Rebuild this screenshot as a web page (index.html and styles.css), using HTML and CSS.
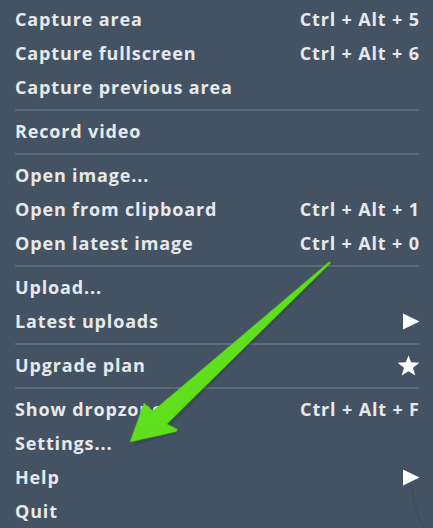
FILE: index.html
```html
<!DOCTYPE html>
<html>
<head>
<meta charset="utf-8">
<link rel="stylesheet" href="styles.css">
</head>
<body>
<div class="menu">
  <div class="item"><span>Capture area</span><span class="key">Ctrl + Alt + 5</span></div>
  <div class="item"><span>Capture fullscreen</span><span class="key">Ctrl + Alt + 6</span></div>
  <div class="item"><span>Capture previous area</span></div>
  <div class="sep"></div>
  <div class="item"><span>Record video</span></div>
  <div class="sep"></div>
  <div class="item"><span>Open image...</span></div>
  <div class="item"><span>Open from clipboard</span><span class="key">Ctrl + Alt + 1</span></div>
  <div class="item"><span>Open latest image</span><span class="key">Ctrl + Alt + 0</span></div>
  <div class="sep"></div>
  <div class="item"><span>Upload...</span></div>
  <div class="item"><span>Latest uploads</span>
    <svg class="tri" width="18" height="17" viewBox="0 0 18 17"><path d="M1 0.5 L17.5 8.5 L1 16.5 Z" fill="#fff"/></svg>
  </div>
  <div class="sep"></div>
  <div class="item"><span>Upgrade plan</span>
    <svg class="star" width="23" height="21" viewBox="0 0 24 22"><path d="M12 0.5 L14.8 7.6 L23.5 8 L16.7 13.3 L19.1 21.5 L12 16.9 L4.9 21.5 L7.3 13.3 L0.5 8 L9.2 7.6 Z" fill="#fff"/></svg>
  </div>
  <div class="sep"></div>
  <div class="item"><span>Show dropzone</span><span class="key">Ctrl + Alt + F</span></div>
  <div class="item"><span>Settings...</span></div>
  <div class="item"><span>Help</span>
    <svg class="tri" width="18" height="17" viewBox="0 0 18 17"><path d="M1 0.5 L17.5 8.5 L1 16.5 Z" fill="#fff"/></svg>
  </div>
  <div class="item"><span>Quit</span></div>
</div>
<svg class="overlay" width="433" height="528" viewBox="0 0 433 528">
  <defs>
    <linearGradient id="g" x1="0" y1="0" x2="1" y2="1">
      <stop offset="0" stop-color="#6ee82c"/>
      <stop offset="1" stop-color="#52d80e"/>
    </linearGradient>
  </defs>
  <path d="M134 446 L147 407 L156 416 L332 265 L168 428 L180 432 Z" fill="#2c3a44" opacity="0.35"/>
  <path d="M130 442 L144 403 L153 411 L329.5 261.5 L330.5 263 L167 424 L177 429 Q178 431 175 432 Z" fill="url(#g)" stroke="#46bb0e" stroke-width="0.6" stroke-linejoin="round"/>
  <path d="M412 488 Q414 512 424 528" fill="none" stroke="#37454f" stroke-width="1" opacity="0.7"/>
</svg>
</body>
</html>
```

FILE: styles.css
```css
html, body {
  margin: 0;
  padding: 0;
}
body {
  background: #435363;
  width: 433px;
  height: 528px;
  overflow: hidden;
  position: relative;
  font-family: "Open Sans", "DejaVu Sans", sans-serif;
}
.menu {
  display: flex;
  flex-direction: column;
  padding: 2px 14px 0 15px;
}
.item {
  height: 34px;
  display: flex;
  align-items: center;
  justify-content: space-between;
  color: #e6e8ea;
  font-size: 18px;
  font-weight: 700;
  letter-spacing: 0.85px;
  white-space: nowrap;
}
.key {
  color: #e6e8ea;
  margin-right: -0.85px;
}
.sep {
  height: 2px;
  margin: 5px 0 3px;
  background: #5d6b78;
}
.tri {
  display: block;
  margin-right: -1px;
}
.star {
  display: block;
  margin-right: -1px;
}
.overlay {
  position: absolute;
  left: 0;
  top: 0;
  pointer-events: none;
}
```
